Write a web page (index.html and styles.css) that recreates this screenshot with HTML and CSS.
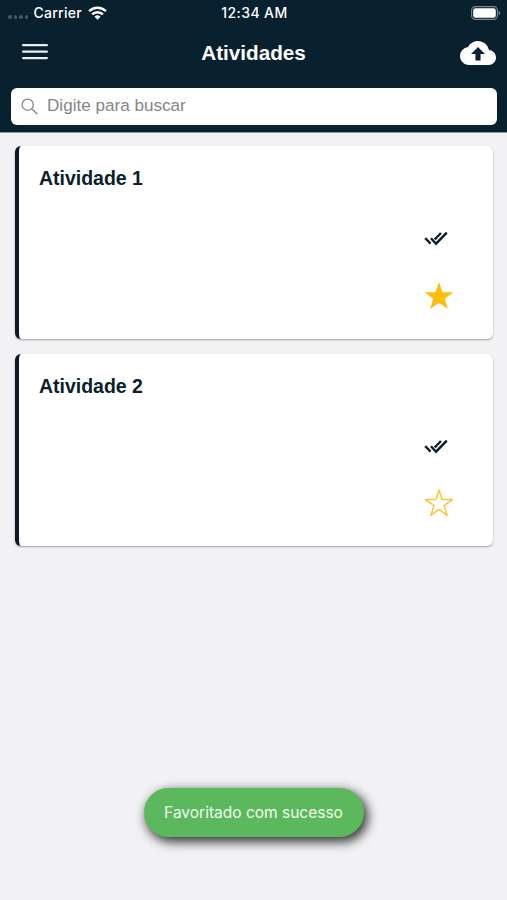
FILE: index.html
```html
<!DOCTYPE html>
<html lang="pt-BR">
<head>
<meta charset="utf-8">
<title>Atividades</title>
<link rel="stylesheet" href="styles.css">
</head>
<body>
<div class="app">
  <header class="header">
    <div class="status">
      <div class="status-left">
        <span class="signal"><i></i><i></i><i></i><i></i></span>
        <span class="carrier">Carrier</span>
        <svg class="wifi" width="19" height="14" viewBox="0 0 19 14" fill="none" stroke="#fff" stroke-width="2.5">
          <path d="M1.1 5.1a12 12 0 0 1 16.8 0"/>
          <path d="M4.1 8.4a7.7 7.7 0 0 1 10.8 0"/>
          <path d="M6.5 10.7a4.3 4.3 0 0 1 6 0l-3 3z" fill="#fff" stroke="none"/>
        </svg>
      </div>
      <span class="clock">12:34 AM</span>
      <div class="status-right">
        <svg width="30" height="14" viewBox="0 0 30 14">
          <rect x=".6" y=".6" width="25.8" height="12.8" rx="3.8" fill="none" stroke="#7c8991" stroke-width="1.1"/>
          <rect x="2.2" y="2.2" width="22.6" height="9.6" rx="2.3" fill="#fff"/>
          <path d="M27.7 4.8q1.6.7 1.6 2.2t-1.6 2.2z" fill="#7c8991"/>
        </svg>
      </div>
    </div>
    <div class="bar">
      <svg class="menu" width="26" height="18" viewBox="0 0 26 18" stroke="#e9edf0" stroke-width="2.2" stroke-linecap="round">
        <path d="M1.1 2.2h23.8M1.1 8.7h23.8M1.1 15.1h23.8"/>
      </svg>
      <h1 class="title">Atividades</h1>
      <svg class="cloud" width="36" height="24" viewBox="0 4 24 16" preserveAspectRatio="none">
        <path fill="#fff" d="M19.35 10.04A7.49 7.49 0 0 0 12 4C9.11 4 6.6 5.64 5.35 8.04A5.994 5.994 0 0 0 0 14c0 3.31 2.69 6 6 6h13c2.76 0 5-2.24 5-5 0-2.64-2.05-4.78-4.65-4.96zM13.7 12.6v4.4h-3.4v-4.4H7.4l4.6-4.6 4.6 4.6h-2.9z"/>
      </svg>
    </div>
    <div class="search">
      <svg width="17" height="17" viewBox="0 0 17 17" fill="none" stroke="#858585" stroke-width="1.3" stroke-linecap="round">
        <circle cx="6.7" cy="6.7" r="5.6"/><path d="M10.8 10.8l5.1 5"/>
      </svg>
      <span>Digite para buscar</span>
    </div>
  </header>
  <main class="list">
    <article class="card">
      <h2>Atividade 1</h2>
      <div class="actions">
        <svg class="checks" width="24" height="15" viewBox="0 0 24 15" fill="none" stroke="#0a1f2d" stroke-width="2.4">
          <path d="M1.2 7.2l5.4 5.5M6.9 7.2l5.2 5.5L22.8 1.6M10.7 8.5l6.3-6.5"/>
        </svg>
        <svg class="star" width="30" height="29" viewBox="0 0 30 29">
          <path fill="#ffbc08" d="M15 1l3.5 10.2h10.9l-8.7 6.5 3.3 10.4-9-6.4-9 6.4 3.3-10.4-8.7-6.5h10.9z"/>
        </svg>
      </div>
    </article>
    <article class="card">
      <h2>Atividade 2</h2>
      <div class="actions">
        <svg class="checks" width="24" height="15" viewBox="0 0 24 15" fill="none" stroke="#0a1f2d" stroke-width="2.4">
          <path d="M1.2 7.2l5.4 5.5M6.9 7.2l5.2 5.5L22.8 1.6M10.7 8.5l6.3-6.5"/>
        </svg>
        <svg class="star" width="30" height="29" viewBox="0 0 30 29">
          <path fill="none" stroke="#ffc33c" stroke-width="1.5" stroke-linejoin="round" d="M15 1.9l3.1 9.7h10.3l-8.4 6 3.2 9.7-8.2-6-8.2 6 3.2-9.7-8.4-6h10.3z"/>
        </svg>
      </div>
    </article>
  </main>
  <div class="toast" role="status">Favoritado com sucesso</div>
</div>
</body>
</html>
```
FILE: styles.css
```css
* {
  box-sizing: border-box;
}

body {
  margin: 0;
  font-family: "Liberation Sans", Arial, sans-serif;
}

.app {
  display: flex;
  flex-direction: column;
  height: 900px;
  background: #f2f2f4;
  overflow: hidden;
}

svg {
  display: block;
  flex: none;
}

.header {
  height: 133px;
  flex: none;
  background: #09202e;
  border-bottom: 1px solid #8d979f;
}

.status {
  display: grid;
  grid-template-columns: 1fr auto 1fr;
  align-items: center;
  height: 26px;
  padding: 0 6px 0 8px;
  color: #fff;
  font: 500 14px/26px Inter, sans-serif;
}

.status-left {
  display: flex;
  align-items: center;
}

.signal {
  display: flex;
  gap: 2px;
  margin: 8px 5px 0 0;
}

.signal i {
  width: 3.6px;
  height: 3.6px;
  border-radius: 50%;
  background: #48565f;
}

.carrier {
  font-size: 14px;
  letter-spacing: .3px;
}

.wifi {
  margin-left: 6px;
}

.clock {
  font-size: 14px;
  letter-spacing: .4px;
}

.status-right {
  display: flex;
  justify-content: flex-end;
}

.bar {
  display: grid;
  grid-template-columns: 1fr auto 1fr;
  align-items: center;
  height: 53px;
  padding: 0 11px 0 22px;
}

.title {
  margin: 0 11px 0 0;
  color: #fff;
  font-size: 20.7px;
  line-height: 24px;
}

.menu {
  margin-top: -1px;
}

.cloud {
  justify-self: end;
}

.search {
  display: flex;
  align-items: center;
  gap: 9px;
  height: 37px;
  margin: 8.5px 10px 0 11px;
  padding-left: 10px;
  border-radius: 6px;
  background: #fff;
  color: #858585;
  font-size: 17.1px;
}

.list {
  display: flex;
  flex-direction: column;
  gap: 15px;
  padding: 13.4px 14px 0 15.4px;
}

.card {
  display: flex;
  flex-direction: column;
  justify-content: space-between;
  height: 192.5px;
  padding: 20px 39px 29.4px 19.5px;
  border-left: 4.5px solid #091b2b;
  border-radius: 6px;
  background: #fff;
  box-shadow: 0 1px 2px rgba(0, 0, 0, .35);
}

.card h2 {
  margin: 0;
  color: #0a1f2d;
  font-size: 19.5px;
  line-height: 24px;
}

.actions {
  display: flex;
  flex-direction: column;
  align-items: flex-end;
  gap: 34.5px;
}

.checks {
  margin-right: 6px;
}

.toast {
  align-self: center;
  width: 220px;
  height: 49px;
  margin-top: auto;
  margin-bottom: 63.5px;
  border-radius: 25px;
  background: #5cb85c;
  box-shadow: 3px 4px 11px 1px rgba(0, 0, 0, .78);
  color: #f2fff0;
  font: 400 15.5px/50px Inter, sans-serif;
  text-align: center;
}
```
